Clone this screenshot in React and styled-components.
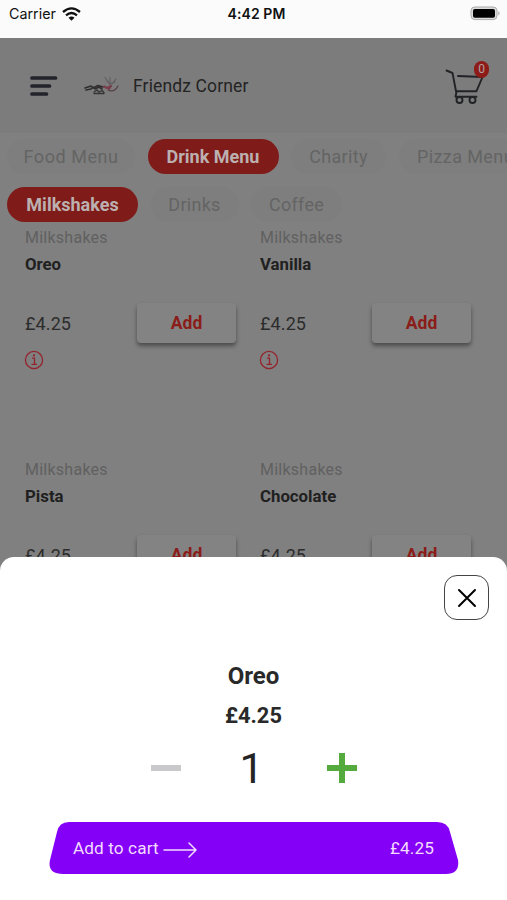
import React from "react";
import styled, { createGlobalStyle } from "styled-components";

const Global = createGlobalStyle`
  *, *::before, *::after { box-sizing: border-box; }
  body { margin: 0; background: #808080; overflow: hidden; }
  button { font: inherit; border: 0; padding: 0; margin: 0; background: none; }
  svg { display: block; flex: none; }
`;

const Phone = styled.div`
  width: 507px;
  height: 900px;
  display: flex;
  flex-direction: column;
  position: relative;
  overflow: hidden;
  background: #808080;
  color: #242424;
  font-family: Roboto, "Liberation Sans", sans-serif;
`;

const StatusBar = styled.div`
  height: 38px;
  flex: none;
  padding: 0 6px 11px 9px;
  display: grid;
  grid-template-columns: 1fr auto 1fr;
  align-items: center;
  background: #fbfbfb;
  color: #111;
  font: 400 14.3px/18px Inter, "Liberation Sans", sans-serif;
`;

const Carrier = styled.div`
  display: flex;
  align-items: center;
  gap: 6px;
  letter-spacing: ${(p) => p.$spacing || "0"};
`;

const Clock = styled.div`
  font-weight: 600;
  font-size: 14px;
  letter-spacing: 0.1px;
  margin-right: -3px;
`;

const BatterySlot = styled.div`
  display: flex;
  justify-content: flex-end;
`;

const Header = styled.header`
  height: 95px;
  flex: none;
  display: flex;
  align-items: center;
  padding: 0 18px 0 29px;
  background: #7c7c7c;
`;

const Logo = styled.span`
  margin-left: 25px;
`;

const ShopName = styled.h1`
  flex: 1;
  margin: 0 0 0 14px;
  font-size: 17.5px;
  font-weight: 400;
  letter-spacing: 0.13px;
`;

const Cart = styled.div`
  position: relative;
  width: 44px;
  height: 46px;
`;

const CartBadge = styled.span`
  position: absolute;
  top: -2px;
  right: 0;
  width: 15px;
  height: 17px;
  border-radius: 8px;
  background: #8d1c18;
  color: #b0a0a0;
  font-size: 12px;
  line-height: 17px;
  text-align: center;
`;

const Tabs = styled.nav`
  display: flex;
  flex: none;
  gap: 12.5px;
  height: 35px;
  margin: ${(p) => p.$top}px 0 0 7px;
`;

const Tab = styled.button`
  flex: none;
  width: ${(p) => p.$width}px;
  height: 35px;
  border-radius: 18px;
  text-align: center;
  white-space: nowrap;
  background: ${(p) => (p.$active ? "#7f1c19" : "#7e7e7e")};
  color: ${(p) => (p.$active ? "#bcb0b0" : "#646464")};
  font-size: 18px;
  font-weight: ${(p) => (p.$active ? 700 : 400)};
  letter-spacing: ${(p) => p.$spacing}px;
`;

const Products = styled.main`
  display: grid;
  grid-template-columns: 235px 235px;
  grid-auto-rows: 232px;
  padding: 6px 0 0 25px;
`;

const Product = styled.article`
  display: flex;
  flex-direction: column;
  width: 211px;
`;

const Category = styled.span`
  height: 20px;
  line-height: 20px;
  font-size: 16px;
  letter-spacing: 0.25px;
  color: #606060;
`;

const ProductName = styled.h2`
  margin: 6px 0 0;
  height: 20px;
  font-size: 16.8px;
  line-height: 20px;
  font-weight: 700;
  color: #202020;
`;

const PriceRow = styled.div`
  display: flex;
  align-items: center;
  justify-content: space-between;
  margin-top: 29px;
  height: 40px;
`;

const Price = styled.span`
  font-size: 18px;
  letter-spacing: 0.1px;
  color: #2c2c2c;
`;

const AddButton = styled.button`
  width: 99px;
  height: 40px;
  border-radius: 4px;
  background: #838383;
  color: #8a1c19;
  font-size: 17.5px;
  font-weight: 700;
  box-shadow: 0 3px 4px rgba(0, 0, 0, 0.42);
`;

const Info = styled.div`
  margin: 7px 0 0 -1px;
`;

const Sheet = styled.section`
  position: absolute;
  left: 0;
  right: 0;
  bottom: 0;
  height: 343px;
  border-radius: 14px 14px 0 0;
  background: #fff;
  display: flex;
  flex-direction: column;
  align-items: center;
`;

const CloseButton = styled.button`
  align-self: flex-end;
  width: 45px;
  height: 45px;
  margin: 18px 18px 0 0;
  border: 1.4px solid #444;
  border-radius: 13px;
  display: grid;
  place-items: center;
`;

const SheetTitle = styled.h2`
  margin: 41px 0 0;
  font-size: 24px;
  line-height: 30px;
  font-weight: 700;
  color: #292929;
`;

const SheetPrice = styled.div`
  margin-top: 12px;
  font-size: 21.8px;
  line-height: 26px;
  font-weight: 700;
  color: #292929;
`;

const Stepper = styled.div`
  display: grid;
  grid-template-columns: 30px 1fr 30px;
  align-items: center;
  width: 206px;
  height: 50px;
  margin-top: 14px;
`;

const Quantity = styled.span`
  font-size: 43px;
  line-height: 50px;
  text-align: center;
  padding-right: 4px;
`;

const CartButton = styled.button`
  width: 410px;
  height: 52px;
  margin: 29px 0 0 1px;
  padding: 0 25px 0 24px;
  display: flex;
  align-items: center;
  background: #8500f7;
  clip-path: path("M20 0H388Q399 0 401 10L409 38Q411 52 397 52H14Q-2 52 1 38L8 10Q10 0 20 0Z");
  color: #f3dcff;
  font-size: 17.2px;
  letter-spacing: 0.1px;
`;

const CartArrow = styled.span`
  margin: 4px auto 0 4px;
`;

const WifiIcon = () => (
  <svg width="19" height="14" viewBox="0 0 19 14" fill="none" stroke="#111" strokeWidth="2.3">
    <path d="M1 5Q9.5-2.2 18 5" />
    <path d="M4 8.3Q9.5 3.8 15 8.3" />
    <path d="M6.5 10.7Q9.5 8.3 12.5 10.7L9.5 13.7Z" fill="#111" stroke="none" />
  </svg>
);

const BatteryIcon = () => (
  <svg width="31" height="15" viewBox="0 0 31 15">
    <rect x="1" y="1" width="26" height="12.6" rx="3.8" fill="#ddd" stroke="#aaa" />
    <rect x="3" y="3" width="22" height="8.8" rx="1.8" fill="#000" />
    <path d="M28.3 5Q31 7.3 28.3 9.6Z" fill="#aaa" />
  </svg>
);

const MenuIcon = () => (
  <svg width="30" height="22" viewBox="0 0 30 22" stroke="#22232b" strokeWidth="3.7" strokeLinecap="round">
    <path d="M3 3H26.5M3 11H20.5M3 19H17.5" />
  </svg>
);

const ShopLogo = () => (
  <svg width="35" height="20" viewBox="0 0 35 20" fill="none" strokeLinecap="round" strokeLinejoin="round">
    <path d="M1 12L7 10L9 12L14 9.5L19 11M2 14L7 13L9 11L11 13L15 11L18 13" stroke="#302e2e" strokeWidth="1.6" />
    <path d="M10 16L13 14L15 16L18 14.5L20 16.5M10 17.5H20" stroke="#343434" strokeWidth="1.3" />
    <path d="M21 1.5L25 7L27 10M26 1.5L26 7M32 3L28 8M23 5L26 8L31 6" stroke="#625d60" strokeWidth="1.1" />
    <path d="M20 10.5L23 12L27 10L25 13" stroke="#793d4b" strokeWidth="2" />
    <path d="M24 14Q30 17 34 10" stroke="#593e44" strokeWidth="1.2" />
  </svg>
);

const CartIcon = () => (
  <svg width="40" height="46" viewBox="0 0 40 46" fill="none" stroke="#222326" strokeWidth="1.9" strokeLinecap="round" strokeLinejoin="round">
    <path d="M1.5 7.5L7.5 10L11 28.2H31.5L37.5 14L13 13" />
    <path d="M11.5 28.5L10.5 33.8H31.5" />
    <circle cx="14.5" cy="37" r="3" />
    <circle cx="27.5" cy="37" r="3" />
  </svg>
);

const InfoIcon = () => (
  <svg width="20" height="20" viewBox="0 0 20 20" fill="none" stroke="#93242e" strokeWidth="1.3">
    <circle cx="10" cy="10" r="8.6" />
    <path d="M8 8.2H10.5V14.2M7.5 14.4H13" />
    <circle cx="10" cy="5.4" r="1.1" fill="#93242e" stroke="none" />
  </svg>
);

const CloseIcon = () => (
  <svg width="20" height="20" viewBox="0 0 20 20" stroke="#000" strokeWidth="2" strokeLinecap="round">
    <path d="M2 2L18 18M18 2L2 18" />
  </svg>
);

const MinusIcon = () => (
  <svg width="30" height="30" viewBox="0 0 30 30">
    <path d="M0 12H30V18H0Z" fill="#c9c9cb" />
  </svg>
);

const PlusIcon = () => (
  <svg width="30" height="30" viewBox="0 0 30 30">
    <path d="M12 0H18V12H30V18H18V30H12V18H0V12H12Z" fill="#55aa3e" />
  </svg>
);

const ArrowIcon = () => (
  <svg width="34" height="18" viewBox="0 0 34 18" fill="none" stroke="#f3dcff" strokeWidth="1.5" strokeLinecap="round" strokeLinejoin="round">
    <path d="M1 9H33M26 2L33 9L26 16" />
  </svg>
);

const menus = [
  { name: "Food Menu", width: 128, spacing: 0.55 },
  { name: "Drink Menu", width: 131, spacing: 0, active: true },
  { name: "Charity", width: 95, spacing: 0.3 },
  { name: "Pizza Menu", width: 134, spacing: 0.4 },
];

const groups = [
  { name: "Milkshakes", width: 131, spacing: 0, active: true },
  { name: "Drinks", width: 88, spacing: 0.3 },
  { name: "Coffee", width: 91, spacing: 0.3 },
];

const products = ["Oreo", "Vanilla", "Pista", "Chocolate"];

const TabRow = ({ items, top }) => (
  <Tabs $top={top}>
    {items.map((t) => (
      <Tab key={t.name} $width={t.width} $spacing={t.spacing} $active={t.active}>
        {t.name}
      </Tab>
    ))}
  </Tabs>
);

export default function App() {
  return (
    <>
      <Global />
      <Phone>
        <StatusBar>
          <Carrier>Carrier <WifiIcon /></Carrier>
          <Clock>4:42 PM</Clock>
          <BatterySlot><BatteryIcon /></BatterySlot>
        </StatusBar>
        <Header>
          <MenuIcon />
          <Logo><ShopLogo /></Logo>
          <ShopName>Friendz Corner</ShopName>
          <Cart>
            <CartIcon />
            <CartBadge>0</CartBadge>
          </Cart>
        </Header>
        <TabRow items={menus} top={6} />
        <TabRow items={groups} top={13} />
        <Products>
          {products.map((name) => (
            <Product key={name}>
              <Category>Milkshakes</Category>
              <ProductName>{name}</ProductName>
              <PriceRow>
                <Price>£4.25</Price>
                <AddButton>Add</AddButton>
              </PriceRow>
              <Info><InfoIcon /></Info>
            </Product>
          ))}
        </Products>
        <Sheet>
          <CloseButton aria-label="Close"><CloseIcon /></CloseButton>
          <SheetTitle>Oreo</SheetTitle>
          <SheetPrice>£4.25</SheetPrice>
          <Stepper>
            <MinusIcon />
            <Quantity>1</Quantity>
            <PlusIcon />
          </Stepper>
          <CartButton>
            Add to cart
            <CartArrow><ArrowIcon /></CartArrow>
            £4.25
          </CartButton>
        </Sheet>
      </Phone>
    </>
  );
}
